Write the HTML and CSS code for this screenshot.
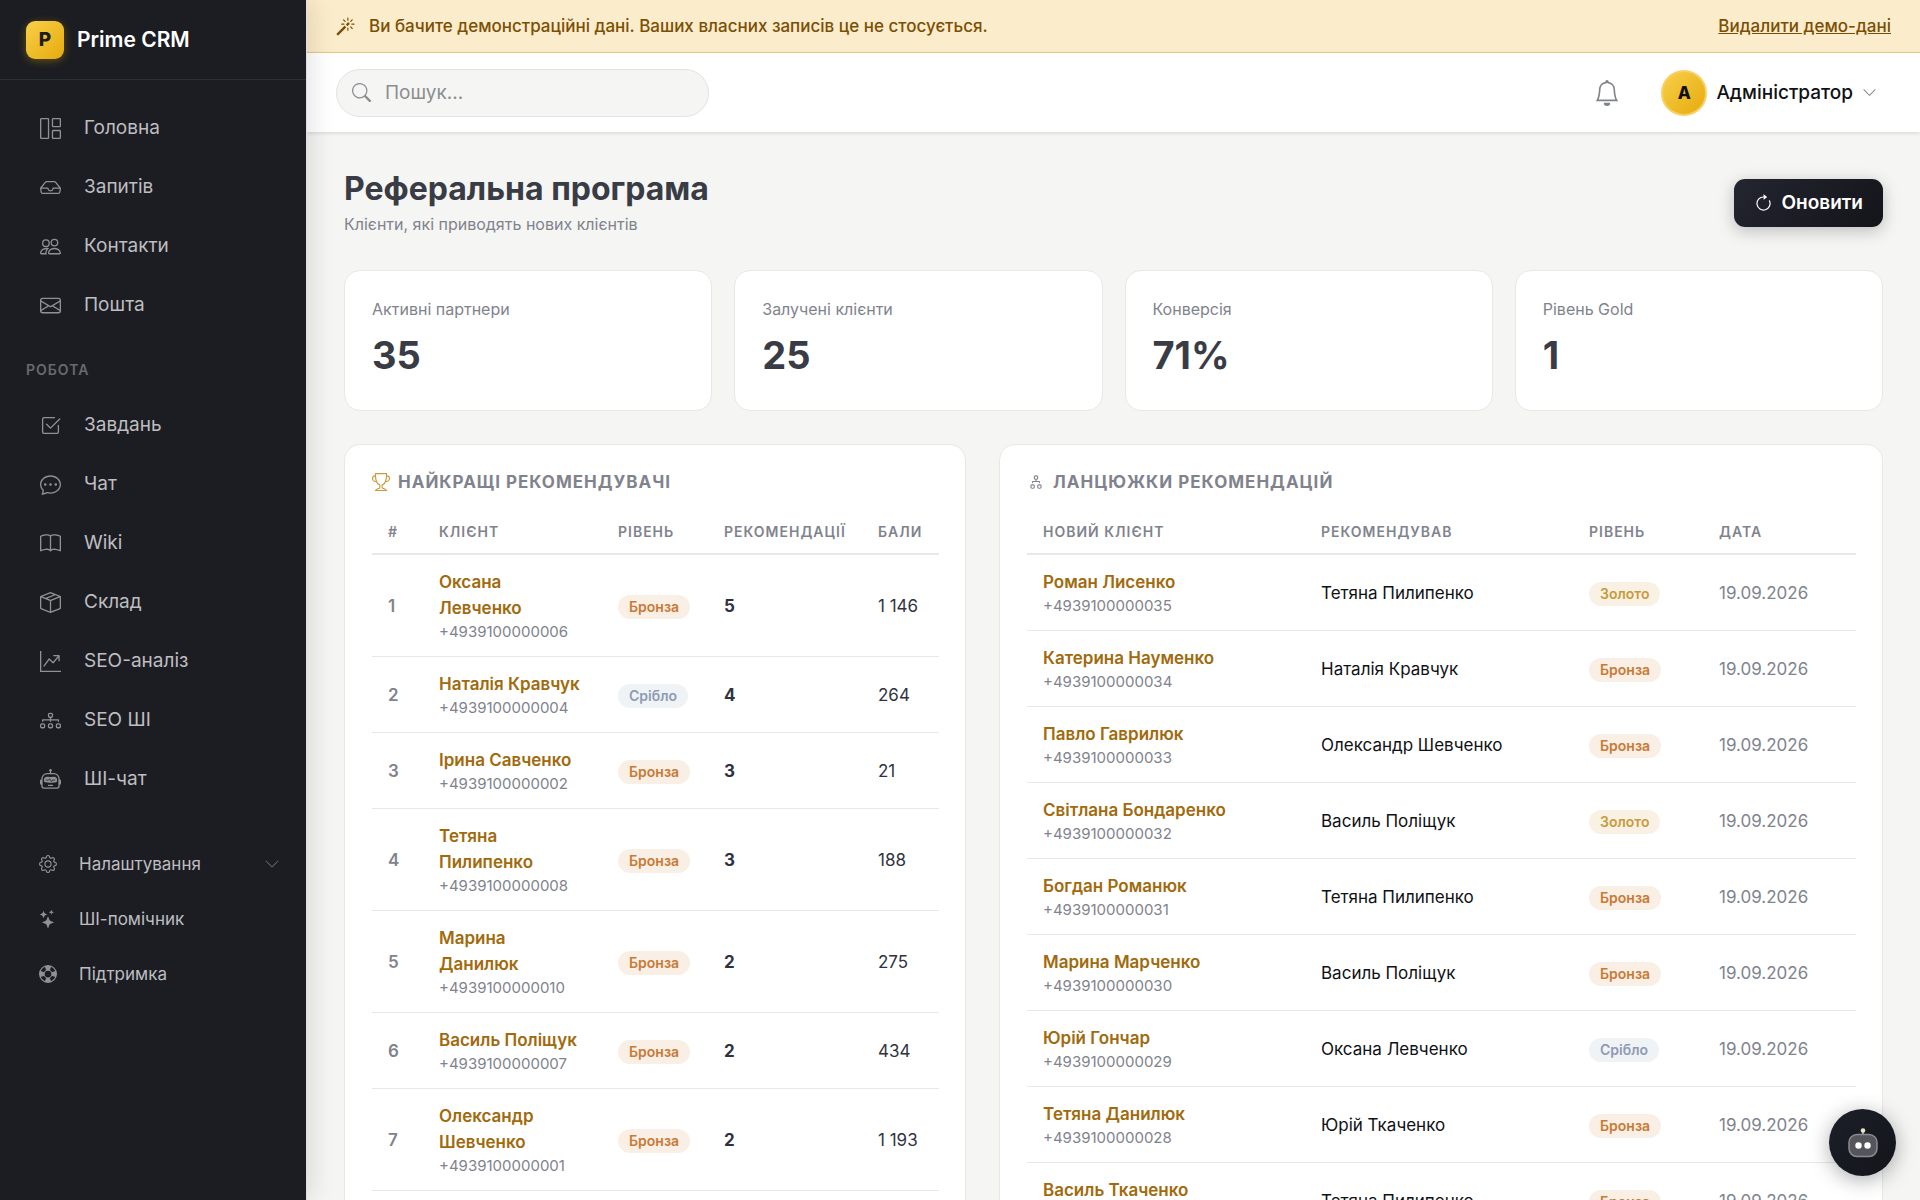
FILE: index.html
```html
<!DOCTYPE html>
<html lang="uk">
<head>
<meta charset="utf-8">
<meta name="viewport" content="width=device-width, initial-scale=1">
<title>Реферальна програма – Prime CRM</title>
<link rel="stylesheet" href="styles.css">
</head>
<body>
<div class="app">
  <aside class="sidebar">
    <a class="brand" href="#"><span class="brand-mark">P</span><span class="brand-name">Prime CRM</span></a>
    <nav class="nav">
      <a class="nav-link" href="#"><svg class="icon" viewBox="0 0 16 16"><path d="M6 1H1v14h5zm9 0h-5v5h5zm0 9v5h-5v-5zM0 1a1 1 0 0 1 1-1h5a1 1 0 0 1 1 1v14a1 1 0 0 1-1 1H1a1 1 0 0 1-1-1zm9 0a1 1 0 0 1 1-1h5a1 1 0 0 1 1 1v5a1 1 0 0 1-1 1h-5a1 1 0 0 1-1-1zm1 8a1 1 0 0 0-1 1v5a1 1 0 0 0 1 1h5a1 1 0 0 0 1-1v-5a1 1 0 0 0-1-1z"/></svg>Головна</a>
      <a class="nav-link" href="#"><svg class="icon" viewBox="0 0 16 16"><path d="M4.98 4a.5.5 0 0 0-.39.188L1.54 8H6a.5.5 0 0 1 .5.5 1.5 1.5 0 1 0 3 0A.5.5 0 0 1 10 8h4.46l-3.05-3.812A.5.5 0 0 0 11.02 4zm9.954 5H10.45a2.5 2.5 0 0 1-4.9 0H1.066l.32 2.562a.5.5 0 0 0 .497.438h12.234a.5.5 0 0 0 .496-.438zM3.809 3.563A1.5 1.5 0 0 1 4.981 3h6.038a1.5 1.5 0 0 1 1.172.563l3.7 4.625a.5.5 0 0 1 .105.374l-.39 3.124A1.5 1.5 0 0 1 14.117 13H1.883a1.5 1.5 0 0 1-1.489-1.314l-.39-3.124a.5.5 0 0 1 .106-.374z"/></svg>Запитів</a>
      <a class="nav-link" href="#"><svg class="icon" viewBox="0 0 16 16"><path d="M15 14s1 0 1-1-1-4-5-4-5 3-5 4 1 1 1 1zm-7.978-1L7 12.996c.001-.264.167-1.03.76-1.72C8.312 10.629 9.282 10 11 10c1.717 0 2.687.63 3.24 1.276.593.69.758 1.457.76 1.72l-.008.002-.014.002zM11 7a2 2 0 1 0 0-4 2 2 0 0 0 0 4m3-2a3 3 0 1 1-6 0 3 3 0 0 1 6 0M6.936 9.28a6 6 0 0 0-1.23-.247A7 7 0 0 0 5 9c-4 0-5 3-5 4q0 1 1 1h4.216A2.24 2.24 0 0 1 5 13c0-1.01.377-2.042 1.09-2.904.243-.294.526-.569.846-.816M4.92 10A5.5 5.5 0 0 0 4 13H1c0-.26.164-1.03.76-1.724.545-.636 1.492-1.256 3.16-1.275zM1.5 5.5a3 3 0 1 1 6 0 3 3 0 0 1-6 0m3-2a2 2 0 1 0 0 4 2 2 0 0 0 0-4"/></svg>Контакти</a>
      <a class="nav-link" href="#"><svg class="icon" viewBox="0 0 16 16"><path d="M0 4a2 2 0 0 1 2-2h12a2 2 0 0 1 2 2v8a2 2 0 0 1-2 2H2a2 2 0 0 1-2-2zm2-1a1 1 0 0 0-1 1v.217l7 4.2 7-4.2V4a1 1 0 0 0-1-1zm13 2.383-4.708 2.825L15 11.105zm-.034 6.876-5.64-3.471L8 9.583l-1.326-.795-5.64 3.47A1 1 0 0 0 2 13h12a1 1 0 0 0 .966-.741M1 11.105l4.708-2.897L1 5.383z"/></svg>Пошта</a>
      <h2 class="nav-heading">Робота</h2>
      <a class="nav-link" href="#"><svg class="icon" viewBox="0 0 16 16"><path d="M3 14.5A1.5 1.5 0 0 1 1.5 13V3A1.5 1.5 0 0 1 3 1.5h8a.5.5 0 0 1 0 1H3a.5.5 0 0 0-.5.5v10a.5.5 0 0 0 .5.5h10a.5.5 0 0 0 .5-.5V8a.5.5 0 0 1 1 0v5a1.5 1.5 0 0 1-1.5 1.5z"/><path d="m8.354 10.354 7-7a.5.5 0 0 0-.708-.708L8 9.293 5.354 6.646a.5.5 0 1 0-.708.708l3 3a.5.5 0 0 0 .708 0"/></svg>Завдань</a>
      <a class="nav-link" href="#"><svg class="icon" viewBox="0 0 16 16"><path d="M5 8a1 1 0 1 1-2 0 1 1 0 0 1 2 0m4 0a1 1 0 1 1-2 0 1 1 0 0 1 2 0m3 1a1 1 0 1 0 0-2 1 1 0 0 0 0 2"/><path d="m2.165 15.803.02-.004c1.83-.363 2.948-.842 3.468-1.105A9 9 0 0 0 8 15c4.418 0 8-3.134 8-7s-3.582-7-8-7-8 3.134-8 7c0 1.76.743 3.37 1.97 4.6a10.4 10.4 0 0 1-.524 2.318l-.003.011a11 11 0 0 1-.244.637c-.079.186.074.394.273.362a22 22 0 0 0 .693-.125m.8-3.108a1 1 0 0 0-.287-.801C1.618 10.83 1 9.468 1 8c0-3.192 3.004-6 7-6s7 2.808 7 6-3.004 6-7 6a8 8 0 0 1-2.088-.272 1 1 0 0 0-.711.074c-.387.196-1.24.57-2.634.893a11 11 0 0 0 .398-2"/></svg>Чат</a>
      <a class="nav-link" href="#"><svg class="icon" viewBox="0 0 16 16"><path d="M1 2.828c.885-.37 2.154-.769 3.388-.893 1.33-.134 2.458.063 3.112.752v9.746c-.935-.53-2.12-.603-3.213-.493-1.18.12-2.37.461-3.287.811zm7.5-.141c.654-.689 1.782-.886 3.112-.752 1.234.124 2.503.523 3.388.893v9.923c-.918-.35-2.107-.692-3.287-.81-1.094-.111-2.278-.039-3.213.492zM8 1.783C7.015.936 5.587.81 4.287.94c-1.514.153-3.042.672-3.994 1.105A.5.5 0 0 0 0 2.5v11a.5.5 0 0 0 .707.455c.882-.4 2.303-.881 3.68-1.02 1.409-.142 2.59.087 3.223.877a.5.5 0 0 0 .78 0c.633-.79 1.814-1.019 3.222-.877 1.378.139 2.8.62 3.681 1.02A.5.5 0 0 0 16 13.5v-11a.5.5 0 0 0-.293-.455c-.952-.433-2.48-.952-3.994-1.105C10.413.809 8.985.936 8 1.783"/></svg>Wiki</a>
      <a class="nav-link" href="#"><svg class="icon" viewBox="0 0 16 16"><path d="M8.186 1.113a.5.5 0 0 0-.372 0L1.846 3.5l2.404.961L10.404 2zm3.564 1.426L5.596 5 8 5.961 14.154 3.5zm3.25 1.7-6.5 2.6v7.922l6.5-2.6V4.24zM7.5 14.762V6.838L1 4.239v7.923zM7.443.184a1.5 1.5 0 0 1 1.114 0l7.129 2.852A.5.5 0 0 1 16 3.5v8.662a1 1 0 0 1-.629.928l-7.185 2.874a.5.5 0 0 1-.372 0L.63 13.09a1 1 0 0 1-.63-.928V3.5a.5.5 0 0 1 .314-.464z"/></svg>Склад</a>
      <a class="nav-link" href="#"><svg class="icon" viewBox="0 0 16 16"><path fill-rule="evenodd" d="M0 0h1v15h15v1H0zm10 3.5a.5.5 0 0 1 .5-.5h4a.5.5 0 0 1 .5.5v4a.5.5 0 0 1-1 0V4.9l-3.613 4.417a.5.5 0 0 1-.74.037L7.06 6.767l-3.656 5.027a.5.5 0 0 1-.808-.588l4-5.5a.5.5 0 0 1 .758-.06l2.609 2.61L13.445 4H10.5a.5.5 0 0 1-.5-.5"/></svg>SEO-аналіз</a>
      <a class="nav-link" href="#"><svg class="icon" viewBox="0 0 16 16"><path fill-rule="evenodd" d="M6 3.5A1.5 1.5 0 0 1 7.5 2h1A1.5 1.5 0 0 1 10 3.5v1A1.5 1.5 0 0 1 8.5 6v1H14a.5.5 0 0 1 .5.5v1a.5.5 0 0 1-1 0V8h-5v.5a.5.5 0 0 1-1 0V8h-5v.5a.5.5 0 0 1-1 0v-1A.5.5 0 0 1 2 7h5.5V6A1.5 1.5 0 0 1 6 4.5zM8.5 5a.5.5 0 0 0 .5-.5v-1a.5.5 0 0 0-.5-.5h-1a.5.5 0 0 0-.5.5v1a.5.5 0 0 0 .5.5zM0 11.5A1.5 1.5 0 0 1 1.5 10h1A1.5 1.5 0 0 1 4 11.5v1A1.5 1.5 0 0 1 2.5 14h-1A1.5 1.5 0 0 1 0 12.5zm1.5-.5a.5.5 0 0 0-.5.5v1a.5.5 0 0 0 .5.5h1a.5.5 0 0 0 .5-.5v-1a.5.5 0 0 0-.5-.5zm4.5.5A1.5 1.5 0 0 1 7.5 10h1a1.5 1.5 0 0 1 1.5 1.5v1A1.5 1.5 0 0 1 8.5 14h-1A1.5 1.5 0 0 1 6 12.5zm1.5-.5a.5.5 0 0 0-.5.5v1a.5.5 0 0 0 .5.5h1a.5.5 0 0 0 .5-.5v-1a.5.5 0 0 0-.5-.5zm4.5.5a1.5 1.5 0 0 1 1.5-1.5h1a1.5 1.5 0 0 1 1.5 1.5v1a1.5 1.5 0 0 1-1.5 1.5h-1a1.5 1.5 0 0 1-1.5-1.5zm1.5-.5a.5.5 0 0 0-.5.5v1a.5.5 0 0 0 .5.5h1a.5.5 0 0 0 .5-.5v-1a.5.5 0 0 0-.5-.5z"/></svg>SEO ШІ</a>
      <a class="nav-link" href="#"><svg class="icon" viewBox="0 0 16 16"><path d="M6 12.5a.5.5 0 0 1 .5-.5h3a.5.5 0 0 1 0 1h-3a.5.5 0 0 1-.5-.5M3 8.062C3 6.76 4.235 5.765 5.53 5.886a26.6 26.6 0 0 0 4.94 0C11.765 5.765 13 6.76 13 8.062v1.157a.93.93 0 0 1-.765.935c-.845.147-2.34.346-4.235.346s-3.39-.2-4.235-.346A.93.93 0 0 1 3 9.219zm4.542-.827a.25.25 0 0 0-.217.068l-.92.9a25 25 0 0 1-1.871-.183.25.25 0 0 0-.068.495c.55.076 1.232.149 2.02.193a.25.25 0 0 0 .189-.071l.754-.736.847 1.71a.25.25 0 0 0 .404.062l.932-.97a25 25 0 0 0 1.922-.188.25.25 0 0 0-.068-.495c-.538.074-1.207.145-1.98.189a.25.25 0 0 0-.166.076l-.754.785-.842-1.7a.25.25 0 0 0-.182-.135"/><path d="M8.5 1.866a1 1 0 1 0-1 0V3h-2A4.5 4.5 0 0 0 1 7.5V8a1 1 0 0 0-1 1v2a1 1 0 0 0 1 1v1a2 2 0 0 0 2 2h10a2 2 0 0 0 2-2v-1a1 1 0 0 0 1-1V9a1 1 0 0 0-1-1v-.5A4.5 4.5 0 0 0 10.5 3h-2zM14 7.5V13a1 1 0 0 1-1 1H3a1 1 0 0 1-1-1V7.5A3.5 3.5 0 0 1 5.5 4h5A3.5 3.5 0 0 1 14 7.5"/></svg>ШІ-чат</a>
    </nav>
    <nav class="nav-tools">
      <button class="tool-link" type="button"><svg class="icon" viewBox="0 0 16 16"><path d="M8 4.754a3.246 3.246 0 1 0 0 6.492 3.246 3.246 0 0 0 0-6.492M5.754 8a2.246 2.246 0 1 1 4.492 0 2.246 2.246 0 0 1-4.492 0"/><path d="M9.796 1.343c-.527-1.79-3.065-1.79-3.592 0l-.094.319a.873.873 0 0 1-1.255.52l-.292-.16c-1.64-.892-3.433.902-2.54 2.541l.159.292a.873.873 0 0 1-.52 1.255l-.319.094c-1.79.527-1.79 3.065 0 3.592l.319.094a.873.873 0 0 1 .52 1.255l-.16.292c-.892 1.64.901 3.434 2.541 2.54l.292-.159a.873.873 0 0 1 1.255.52l.094.319c.527 1.79 3.065 1.79 3.592 0l.094-.319a.873.873 0 0 1 1.255-.52l.292.16c1.64.893 3.434-.902 2.54-2.541l-.159-.292a.873.873 0 0 1 .52-1.255l.319-.094c1.79-.527 1.79-3.065 0-3.592l-.319-.094a.873.873 0 0 1-.52-1.255l.16-.292c.893-1.64-.902-3.433-2.541-2.54l-.292.159a.873.873 0 0 1-1.255-.52zm-2.633.283c.246-.835 1.428-.835 1.674 0l.094.319a1.873 1.873 0 0 0 2.693 1.115l.291-.16c.764-.415 1.6.42 1.184 1.185l-.159.292a1.873 1.873 0 0 0 1.116 2.692l.318.094c.835.246.835 1.428 0 1.674l-.319.094a1.873 1.873 0 0 0-1.115 2.693l.16.291c.415.764-.42 1.6-1.185 1.184l-.291-.159a1.873 1.873 0 0 0-2.693 1.116l-.094.318c-.246.835-1.428.835-1.674 0l-.094-.319a1.873 1.873 0 0 0-2.692-1.115l-.292.16c-.764.415-1.6-.42-1.184-1.185l.159-.291A1.873 1.873 0 0 0 1.945 8.93l-.319-.094c-.835-.246-.835-1.428 0-1.674l.319-.094A1.873 1.873 0 0 0 3.06 4.377l-.16-.292c-.415-.764.42-1.6 1.185-1.184l.292.159a1.873 1.873 0 0 0 2.692-1.115z"/></svg>Налаштування<svg class="chevron" viewBox="0 0 16 16"><path d="M1.646 4.646a.5.5 0 0 1 .708 0L8 10.293l5.646-5.647a.5.5 0 0 1 .708.708l-6 6a.5.5 0 0 1-.708 0l-6-6a.5.5 0 0 1 0-.708"/></svg></button>
      <a class="tool-link" href="#"><svg class="icon" viewBox="0 0 16 16"><path d="M7.657 6.247c.11-.33.576-.33.686 0l.645 1.937a2.89 2.89 0 0 0 1.829 1.828l1.936.645c.33.11.33.576 0 .686l-1.937.645a2.89 2.89 0 0 0-1.828 1.829l-.645 1.936a.361.361 0 0 1-.686 0l-.645-1.937a2.89 2.89 0 0 0-1.828-1.828l-1.937-.645a.361.361 0 0 1 0-.686l1.937-.645a2.89 2.89 0 0 0 1.828-1.828zM3.794 1.148a.217.217 0 0 1 .412 0l.387 1.162c.173.518.579.924 1.097 1.097l1.162.387a.217.217 0 0 1 0 .412l-1.162.387A1.73 1.73 0 0 0 4.593 5.69l-.387 1.162a.217.217 0 0 1-.412 0L3.407 5.69A1.73 1.73 0 0 0 2.31 4.593l-1.162-.387a.217.217 0 0 1 0-.412l1.162-.387A1.73 1.73 0 0 0 3.407 2.31zM10.863.099a.145.145 0 0 1 .274 0l.258.774c.115.346.386.617.732.732l.774.258a.145.145 0 0 1 0 .274l-.774.258a1.16 1.16 0 0 0-.732.732l-.258.774a.145.145 0 0 1-.274 0l-.258-.774a1.16 1.16 0 0 0-.732-.732L9.1 2.137a.145.145 0 0 1 0-.274l.774-.258c.346-.115.617-.386.732-.732z"/></svg>ШІ-помічник</a>
      <a class="tool-link" href="#"><svg class="icon" viewBox="0 0 16 16"><path d="M8 16A8 8 0 1 0 8 0a8 8 0 0 0 0 16m6.43-5.228a7.03 7.03 0 0 1-3.658 3.658l-1.115-2.788a4 4 0 0 0 1.985-1.985zM5.228 14.43a7.03 7.03 0 0 1-3.658-3.658l2.788-1.115a4 4 0 0 0 1.985 1.985zm9.202-9.202-2.788 1.115a4 4 0 0 0-1.985-1.985l1.115-2.788a7.03 7.03 0 0 1 3.658 3.658m-8.087-.87a4 4 0 0 0-1.985 1.985L1.57 5.228A7.03 7.03 0 0 1 5.228 1.57zM8 11a3 3 0 1 1 0-6 3 3 0 0 1 0 6"/></svg>Підтримка</a>
    </nav>
  </aside>

  <div class="page">
    <div class="demo-bar">
      <svg class="demo-icon" viewBox="0 0 16 16"><path d="M9.5 2.672a.5.5 0 1 0 1 0V.843a.5.5 0 0 0-1 0zm4.5.035A.5.5 0 0 0 13.293 2L12 3.293a.5.5 0 1 0 .707.707zM7.293 4A.5.5 0 1 0 8 3.293L6.707 2A.5.5 0 0 0 6 2.707zm-.621 2.5a.5.5 0 1 0 0-1H4.843a.5.5 0 1 0 0 1zm8.485 0a.5.5 0 1 0 0-1h-1.829a.5.5 0 0 0 0 1zM13.293 10A.5.5 0 1 0 14 9.293L12.707 8a.5.5 0 1 0-.707.707zM9.5 11.157a.5.5 0 0 0 1 0V9.328a.5.5 0 0 0-1 0zm1.854-5.097a.5.5 0 0 0 0-.706l-.708-.708a.5.5 0 0 0-.707 0L8.646 5.94a.5.5 0 0 0 0 .707l.708.708a.5.5 0 0 0 .707 0l1.293-1.293Zm-3 3a.5.5 0 0 0 0-.706l-.708-.708a.5.5 0 0 0-.707 0L.646 13.94a.5.5 0 0 0 0 .707l.707.707a.5.5 0 0 0 .707 0z"/></svg>
      <span>Ви бачите демонстраційні дані. Ваших власних записів це не стосується.</span>
      <a class="demo-link" href="#">Видалити демо-дані</a>
    </div>
    <header class="topbar">
      <label class="search">
        <svg class="search-icon" viewBox="0 0 16 16"><path d="M11.742 10.344a6.5 6.5 0 1 0-1.397 1.398h-.001q.044.06.098.115l3.85 3.85a1 1 0 0 0 1.415-1.414l-3.85-3.85a1 1 0 0 0-.115-.1zM12 6.5a5.5 5.5 0 1 1-11 0 5.5 5.5 0 0 1 11 0"/></svg>
        <input class="search-input" type="search" placeholder="Пошук..." aria-label="Пошук">
      </label>
      <button class="bell" type="button" aria-label="Сповіщення"><svg class="bell-icon" viewBox="0 0 16 16"><path d="M8 16a2 2 0 0 0 2-2H6a2 2 0 0 0 2 2M8 1.918l-.797.161A4 4 0 0 0 4 6c0 .628-.134 2.197-.459 3.742-.16.767-.376 1.566-.663 2.258h10.244c-.287-.692-.502-1.49-.663-2.258C12.134 8.197 12 6.628 12 6a4 4 0 0 0-3.203-3.92zM14.22 12c.223.447.481.801.78 1H1c.299-.199.557-.553.78-1C2.68 10.2 3 6.88 3 6c0-2.42 1.72-4.44 4.005-4.901a1 1 0 1 1 1.99 0A5 5 0 0 1 13 6c0 .88.32 4.2 1.22 6"/></svg></button>
      <button class="account" type="button"><span class="avatar">A</span>Адміністратор<svg class="chevron" viewBox="0 0 16 16"><path d="M1.646 4.646a.5.5 0 0 1 .708 0L8 10.293l5.646-5.647a.5.5 0 0 1 .708.708l-6 6a.5.5 0 0 1-.708 0l-6-6a.5.5 0 0 1 0-.708"/></svg></button>
    </header>

    <main class="content">
      <div class="page-head">
        <div>
          <h1 class="title">Реферальна програма</h1>
          <p class="subtitle">Клієнти, які приводять нових клієнтів</p>
        </div>
        <button class="refresh" type="button"><svg class="refresh-icon" viewBox="0 0 16 16"><path d="M8 3a5 5 0 1 0 4.546 2.914.5.5 0 0 1 .908-.417A6 6 0 1 1 8 2z"/><path d="M8 4.466V.534a.25.25 0 0 1 .41-.192l2.36 1.966c.12.1.12.284 0 .384L8.41 4.658A.25.25 0 0 1 8 4.466"/></svg>Оновити</button>
      </div>

      <section class="stats">
        <div class="card stat"><div class="stat-label">Активні партнери</div><div class="stat-value">35</div></div>
        <div class="card stat"><div class="stat-label">Залучені клієнти</div><div class="stat-value">25</div></div>
        <div class="card stat"><div class="stat-label">Конверсія</div><div class="stat-value">71%</div></div>
        <div class="card stat"><div class="stat-label">Рівень Gold</div><div class="stat-value">1</div></div>
      </section>

      <div class="panels">
        <section class="card panel panel-top">
          <h2 class="panel-title"><svg class="panel-icon gold" viewBox="0 0 16 16"><path d="M2.5.5A.5.5 0 0 1 3 0h10a.5.5 0 0 1 .5.5q0 .807-.034 1.536a3 3 0 1 1-1.133 5.89c-.79 1.865-1.878 2.777-2.833 3.011v2.173l1.425.356c.194.048.377.135.537.255L13.3 15.1a.5.5 0 0 1-.3.9H3a.5.5 0 0 1-.3-.9l1.838-1.379c.16-.12.343-.207.537-.255L6.5 13.11v-2.173c-.955-.234-2.043-1.146-2.833-3.012a3 3 0 1 1-1.132-5.89A33 33 0 0 1 2.5.5m.099 2.54a2 2 0 0 0 .72 3.935c-.333-1.05-.588-2.346-.72-3.935m10.083 3.935a2 2 0 0 0 .72-3.935c-.133 1.59-.388 2.885-.72 3.935M3.504 1q.01.775.056 1.469c.13 2.028.457 3.546.87 4.667C5.294 9.48 6.484 10 7 10a.5.5 0 0 1 .5.5v2.61a1 1 0 0 1-.757.97l-1.426.356a.5.5 0 0 0-.179.085L4.5 15h7l-.638-.479a.5.5 0 0 0-.18-.085l-1.425-.356a1 1 0 0 1-.757-.97V10.5A.5.5 0 0 1 9 10c.516 0 1.706-.52 2.57-2.864.413-1.12.74-2.64.87-4.667q.045-.694.056-1.469z"/></svg>Найкращі рекомендувачі</h2>
          <table class="table">
            <colgroup><col class="w-rank"><col><col class="w-level"><col class="w-refs"><col class="w-points"></colgroup>
            <thead><tr><th>#</th><th>Клієнт</th><th>Рівень</th><th>Рекомендації</th><th>Бали</th></tr></thead>
            <tbody>
              <tr><td class="rank">1</td><td><a class="name" href="#">Оксана Левченко</a><div class="phone">+4939100000006</div></td><td><span class="badge bronze">Бронза</span></td><td class="refs">5</td><td class="points">1 146</td></tr>
              <tr><td class="rank">2</td><td><a class="name" href="#">Наталія Кравчук</a><div class="phone">+4939100000004</div></td><td><span class="badge silver">Срібло</span></td><td class="refs">4</td><td class="points">264</td></tr>
              <tr><td class="rank">3</td><td><a class="name" href="#">Ірина Савченко</a><div class="phone">+4939100000002</div></td><td><span class="badge bronze">Бронза</span></td><td class="refs">3</td><td class="points">21</td></tr>
              <tr><td class="rank">4</td><td><a class="name" href="#">Тетяна Пилипенко</a><div class="phone">+4939100000008</div></td><td><span class="badge bronze">Бронза</span></td><td class="refs">3</td><td class="points">188</td></tr>
              <tr><td class="rank">5</td><td><a class="name" href="#">Марина Данилюк</a><div class="phone">+4939100000010</div></td><td><span class="badge bronze">Бронза</span></td><td class="refs">2</td><td class="points">275</td></tr>
              <tr><td class="rank">6</td><td><a class="name" href="#">Василь Поліщук</a><div class="phone">+4939100000007</div></td><td><span class="badge bronze">Бронза</span></td><td class="refs">2</td><td class="points">434</td></tr>
              <tr><td class="rank">7</td><td><a class="name" href="#">Олександр Шевченко</a><div class="phone">+4939100000001</div></td><td><span class="badge bronze">Бронза</span></td><td class="refs">2</td><td class="points">1 193</td></tr>
            </tbody>
          </table>
        </section>

        <section class="card panel panel-chains">
          <h2 class="panel-title"><svg class="panel-icon" viewBox="0 0 16 16"><path fill-rule="evenodd" d="M6 3.5A1.5 1.5 0 0 1 7.5 2h1A1.5 1.5 0 0 1 10 3.5v1A1.5 1.5 0 0 1 8.5 6v1H11a.5.5 0 0 1 .5.5v1a.5.5 0 0 1-1 0V8h-5v.5a.5.5 0 0 1-1 0v-1A.5.5 0 0 1 5 7h2.5V6A1.5 1.5 0 0 1 6 4.5zM8.5 5a.5.5 0 0 0 .5-.5v-1a.5.5 0 0 0-.5-.5h-1a.5.5 0 0 0-.5.5v1a.5.5 0 0 0 .5.5zM3 11.5A1.5 1.5 0 0 1 4.5 10h1A1.5 1.5 0 0 1 7 11.5v1A1.5 1.5 0 0 1 5.5 14h-1A1.5 1.5 0 0 1 3 12.5zm1.5-.5a.5.5 0 0 0-.5.5v1a.5.5 0 0 0 .5.5h1a.5.5 0 0 0 .5-.5v-1a.5.5 0 0 0-.5-.5zm4.5.5a1.5 1.5 0 0 1 1.5-1.5h1a1.5 1.5 0 0 1 1.5 1.5v1a1.5 1.5 0 0 1-1.5 1.5h-1A1.5 1.5 0 0 1 9 12.5zm1.5-.5a.5.5 0 0 0-.5.5v1a.5.5 0 0 0 .5.5h1a.5.5 0 0 0 .5-.5v-1a.5.5 0 0 0-.5-.5z"/></svg>Ланцюжки рекомендацій</h2>
          <table class="table">
            <colgroup><col><col class="w-by"><col class="w-tier"><col class="w-date"></colgroup>
            <thead><tr><th>Новий клієнт</th><th>Рекомендував</th><th>Рівень</th><th>Дата</th></tr></thead>
            <tbody>
              <tr><td><a class="name" href="#">Роман Лисенко</a><div class="phone">+4939100000035</div></td><td>Тетяна Пилипенко</td><td><span class="badge golden">Золото</span></td><td class="date">19.09.2026</td></tr>
              <tr><td><a class="name" href="#">Катерина Науменко</a><div class="phone">+4939100000034</div></td><td>Наталія Кравчук</td><td><span class="badge bronze">Бронза</span></td><td class="date">19.09.2026</td></tr>
              <tr><td><a class="name" href="#">Павло Гаврилюк</a><div class="phone">+4939100000033</div></td><td>Олександр Шевченко</td><td><span class="badge bronze">Бронза</span></td><td class="date">19.09.2026</td></tr>
              <tr><td><a class="name" href="#">Світлана Бондаренко</a><div class="phone">+4939100000032</div></td><td>Василь Поліщук</td><td><span class="badge golden">Золото</span></td><td class="date">19.09.2026</td></tr>
              <tr><td><a class="name" href="#">Богдан Романюк</a><div class="phone">+4939100000031</div></td><td>Тетяна Пилипенко</td><td><span class="badge bronze">Бронза</span></td><td class="date">19.09.2026</td></tr>
              <tr><td><a class="name" href="#">Марина Марченко</a><div class="phone">+4939100000030</div></td><td>Василь Поліщук</td><td><span class="badge bronze">Бронза</span></td><td class="date">19.09.2026</td></tr>
              <tr><td><a class="name" href="#">Юрій Гончар</a><div class="phone">+4939100000029</div></td><td>Оксана Левченко</td><td><span class="badge silver">Срібло</span></td><td class="date">19.09.2026</td></tr>
              <tr><td><a class="name" href="#">Тетяна Данилюк</a><div class="phone">+4939100000028</div></td><td>Юрій Ткаченко</td><td><span class="badge bronze">Бронза</span></td><td class="date">19.09.2026</td></tr>
              <tr><td><a class="name" href="#">Василь Ткаченко</a><div class="phone">+4939100000027</div></td><td>Тетяна Пилипенко</td><td><span class="badge bronze">Бронза</span></td><td class="date">19.09.2026</td></tr>
            </tbody>
          </table>
        </section>
      </div>
    </main>
  </div>
</div>

<button class="assistant" type="button" aria-label="ШІ-помічник">
  <svg class="assistant-icon" viewBox="0 0 32 32"><path d="M16 3v5" stroke="#c9c9c4" stroke-width="1.5"/><circle cx="16" cy="3.500" r="2.300" fill="#e6e6c8"/><rect x="2" y="7.500" width="28" height="22" rx="8" fill="#55565c" stroke="#8b8c91" stroke-width="1.500"/><circle cx="11.500" cy="18.500" r="3.200" fill="#fff"/><circle cx="20.500" cy="18.500" r="3.200" fill="#fff"/></svg>
</button>
</body>
</html>
```

FILE: styles.css
```css
* {
  box-sizing: border-box;
}

body {
  margin: 0;
  background: #f5f5f3;
  color: #0f1115;
  font-family: Inter, "Noto Sans", sans-serif;
  font-size: 17px;
  line-height: 26px;
}

h1, h2, p {
  margin: 0;
}

a {
  color: inherit;
  text-decoration: none;
}

button {
  border: 0;
  padding: 0;
  background: none;
  color: inherit;
  font: inherit;
  cursor: pointer;
}

svg {
  display: block;
  flex: none;
  fill: currentColor;
}

.app {
  display: flex;
  height: 100vh;
  overflow: hidden;
}

/* Sidebar */

.sidebar {
  position: relative;
  z-index: 2;
  flex: none;
  width: 307px;
  overflow: hidden auto;
  scrollbar-width: none;
  background: #1c1d22;
  border-right: 1px solid #dededc;
  box-shadow: 4px 0 24px rgba(20, 22, 20, 0.12);
  color: #bebec1;
}

.brand {
  display: flex;
  align-items: center;
  gap: 13px;
  height: 80px;
  padding: 0 26px;
  border-bottom: 1px solid #2f3035;
}

.brand-mark {
  display: grid;
  place-items: center;
  width: 38px;
  height: 38px;
  border-radius: 9px;
  background: linear-gradient(135deg, #f8cf4a, #e6ab0c);
  box-shadow: 0 2px 9px rgba(234, 179, 8, 0.35);
  color: #1c1d22;
  font-size: 19px;
  font-weight: 800;
}

.brand-name {
  color: #fff;
  font-size: 21px;
  font-weight: 600;
}

.nav {
  display: flex;
  flex-direction: column;
  gap: 5px;
  padding: 21px 13px 0;
}

.nav-link {
  display: flex;
  align-items: center;
  gap: 23px;
  height: 54px;
  padding: 0 27px;
  font-size: 19px;
}

.nav-link .icon {
  width: 21px;
  height: 21px;
  color: #919195;
}

.nav-heading {
  margin: 20px 0 10px;
  padding: 0 13px;
  color: #68696e;
  font-size: 14px;
  font-weight: 600;
  line-height: 26px;
  letter-spacing: 1px;
  text-transform: uppercase;
}

.nav-tools {
  display: flex;
  flex-direction: column;
  gap: 4px;
  padding: 32px 26px 0 39px;
}

.tool-link {
  display: flex;
  align-items: center;
  gap: 22px;
  height: 51px;
  font-size: 17px;
}

.tool-link .icon {
  width: 18px;
  height: 18px;
  color: #919195;
}

.tool-link .chevron {
  width: 16px;
  height: 16px;
  margin-left: auto;
  color: #68696e;
}

/* Top area */

.page {
  display: flex;
  flex: 1;
  flex-direction: column;
  min-width: 0;
}

.demo-bar {
  display: flex;
  flex: none;
  align-items: center;
  gap: 14px;
  height: 53px;
  padding: 0 29px;
  border-bottom: 1px solid #efd087;
  background: #fbeccb;
  color: #7a4f05;
  font-weight: 500;
}

.demo-icon {
  width: 19px;
  height: 19px;
}

.demo-link {
  margin-left: auto;
  text-decoration: underline;
}

.topbar {
  position: relative;
  z-index: 1;
  display: flex;
  flex: none;
  align-items: center;
  height: 79px;
  padding: 0 43px 0 29px;
  background: #fff;
  box-shadow: 0 1px 4px rgba(20, 22, 20, 0.14);
}

.search {
  display: flex;
  align-items: center;
  gap: 14px;
  width: 373px;
  height: 48px;
  padding: 0 15px;
  border: 1px solid #e3e3e1;
  border-radius: 24px;
  background: #f5f5f3;
}

.search-icon {
  width: 19px;
  height: 19px;
  color: #8b8d92;
}

.search-input {
  flex: 1;
  min-width: 0;
  padding: 0;
  border: 0;
  outline: 0;
  background: none;
  color: inherit;
  font: inherit;
  font-size: 19px;
}

.search-input::placeholder {
  color: #8b8d92;
}

.bell {
  margin-left: auto;
  margin-right: 41px;
  color: #80838a;
}

.bell-icon {
  width: 26px;
  height: 26px;
}

.account {
  display: flex;
  align-items: center;
  gap: 9px;
  font-size: 19px;
  font-weight: 500;
}

.account .chevron {
  width: 15px;
  height: 15px;
  color: #80838a;
}

.avatar {
  display: grid;
  place-items: center;
  width: 46px;
  height: 46px;
  border: 2px solid #f9d065;
  border-radius: 50%;
  background: linear-gradient(135deg, #f8cf4a, #e6ab0c);
  font-size: 17px;
  font-weight: 800;
}

/* Content */

.content {
  flex: 1;
  min-height: 0;
  overflow: hidden auto;
  scrollbar-width: none;
  padding: 37px 37px 37px 37px;
}

.page-head {
  display: flex;
  align-items: center;
  justify-content: space-between;
  margin-bottom: 33px;
}

.title {
  color: #393c45;
  font-size: 32px;
  font-weight: 700;
  line-height: 40px;
}

.subtitle {
  margin-top: 3px;
  color: #80838d;
  font-size: 16px;
  line-height: 25px;
}

.refresh {
  display: flex;
  align-items: center;
  gap: 8px;
  height: 48px;
  padding: 0 20px;
  border-radius: 11px;
  background: linear-gradient(135deg, #232530, #14151a);
  box-shadow: 0 4px 16px rgba(20, 22, 30, 0.25);
  color: #fff;
  font-size: 19px;
  font-weight: 600;
}

.refresh-icon {
  width: 19px;
  height: 19px;
}

.card {
  border: 1px solid #e8e8e6;
  border-radius: 16px;
  background: #fff;
}

.stats {
  display: grid;
  grid-template-columns: repeat(4, minmax(0, 1fr));
  gap: 22px;
  margin-bottom: 33px;
}

.stat {
  padding: 25px 27px 30px;
}

.stat-label {
  color: #80838d;
  font-size: 16px;
}

.stat-value {
  margin-top: 8px;
  color: #393c45;
  font-size: 38px;
  font-weight: 700;
  line-height: 50px;
}

.panels {
  display: grid;
  grid-template-columns: repeat(12, minmax(0, 1fr));
  gap: 33px;
}

.panel {
  padding: 23px 26px 26px 27px;
}

.panel-top {
  grid-column: span 5;
}

.panel-chains {
  grid-column: span 7;
}

.panel-title {
  display: flex;
  align-items: center;
  gap: 8px;
  color: #80838d;
  font-size: 17px;
  font-weight: 700;
  line-height: 28px;
  letter-spacing: 1px;
  text-transform: uppercase;
}

.panel-icon {
  width: 18px;
  height: 18px;
}

.gold {
  color: #c99a3a;
}

.table {
  width: 100%;
  border-collapse: collapse;
  table-layout: fixed;
}

.table th {
  height: 58px;
  padding: 14px 16px 0;
  border-bottom: 2px solid #e8e8e6;
  color: #80838d;
  font-size: 14px;
  font-weight: 600;
  letter-spacing: 1px;
  text-align: left;
  text-transform: uppercase;
  white-space: nowrap;
}

.table td {
  padding: 14px 16px;
  border-bottom: 1px solid #e8e8e6;
  vertical-align: middle;
}

/* The client column takes whatever width the others leave. */
.w-rank { width: 51px; }
.w-level { width: 106px; }
.w-refs { width: 154px; }
.w-points { width: 77px; }
.w-by { width: 268px; }
.w-tier { width: 130px; }
.w-date { width: 153px; }

.name {
  color: #a16a0c;
  font-weight: 600;
}

.phone {
  color: #80838d;
  font-size: 15px;
  line-height: 21px;
}

.rank {
  color: #80838d;
  font-weight: 600;
}

.refs {
  color: #2f3340;
  font-weight: 700;
}

.points {
  color: #2f3340;
  white-space: nowrap;
}

.date {
  color: #80838d;
}

.badge {
  display: inline-block;
  padding: 0 11px;
  border-radius: 12px;
  font-size: 14px;
  font-weight: 600;
  line-height: 24px;
}

.bronze {
  background: #f9efe5;
  color: #c97a35;
}

.silver {
  background: #f0f3f6;
  color: #8f9bb3;
}

.golden {
  background: #f9f2e4;
  color: #c99a3a;
}

/* Floating assistant */

.assistant {
  position: fixed;
  z-index: 3;
  right: 24px;
  bottom: 24px;
  display: grid;
  place-items: center;
  width: 67px;
  height: 67px;
  border-radius: 50%;
  background: linear-gradient(135deg, #1c1f2a, #14151a);
  box-shadow: 0 4px 20px rgba(20, 22, 30, 0.35);
}

.assistant-icon {
  width: 32px;
  height: 32px;
}
```
